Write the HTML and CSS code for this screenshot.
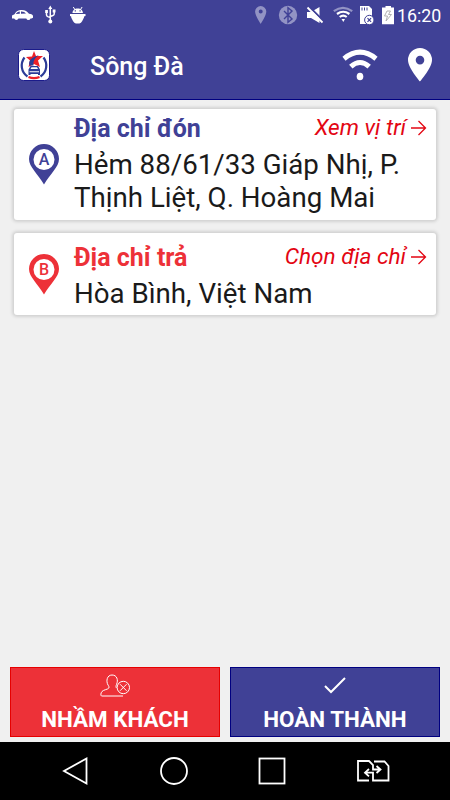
FILE: index.html
```html
<!DOCTYPE html>
<html lang="vi">
  <head>
    <title>Sông Đà</title>
    <meta charset="utf-8">
    <meta name="viewport" content="width=device-width, initial-scale=1">
    <link rel="stylesheet" href="styles.css">
  </head>
  <body>

    <div class="status-bar">
      <svg class="status-left" width="90" height="32" viewBox="0 0 90 32">
        <!-- car -->
        <path fill="#fff" d="M12 18.500v-3l2.500-1.200c1.500-2.500 3-3.900 6-4.200 4.500-.3 6.500 1 8.500 3.700 2.500.2 4 .9 4 2.300v1.600l-1.500.8h-1a2.200 2.200 0 0 1-4.200 0h-7.800a2.300 2.300 0 0 1-4.300 0z"/>
        <path fill="#404196" d="M15.800 14c1-1.500 2.200-2.300 4-2.600v2.300zM21 11.400c2.500-.1 3.800.6 5 2l-5 .3z"/>
        <!-- usb -->
        <g fill="none" stroke="#fff" stroke-width="1.500">
          <path d="M50.300 8v13M46.500 11.500V15q0 1 1.300 1.600l2.500 1M54.200 11v3q0 1-1.300 1.500l-2.600 1"/>
        </g>
        <path fill="#fff" d="M48.300 9l2-3.500 2 3.500zM45.200 10h2.700v3h-2.700zM52.700 9.500h2.800v3h-2.800z"/>
        <circle cx="50.300" cy="21.500" r="2" fill="#fff"/>
        <!-- android bug -->
        <path fill="#fff" d="M72.500 13c0-2.500 2-4.500 5.200-4.500s5.200 2 5.200 4.500zM70 14h15.500v2l-1.500.6v1l-1 1.800c-1 2.800-2.700 4.200-5.300 4.200s-4.500-1.400-5.500-4.200l-1-1.800v-1L70 16z"/>
        <path d="M73.300 7l1.700 2.800M82.100 7l-1.700 2.800" stroke="#fff" stroke-width="1"/>
        <path fill="#404196" d="M74.700 10.300h1.200v1.200h-1.200zM79.500 10.300h1.200v1.200h-1.200z"/>
      </svg>
      <svg class="status-right" width="144" height="32" viewBox="252 0 144 32">
        <path fill="#9293c4" fill-rule="evenodd" d="M260.700 6a5.600 5.600 0 0 0-5.600 5.600c0 4 5.600 12.400 5.600 12.400s5.600-8.400 5.600-12.400a5.600 5.600 0 0 0-5.600-5.600zm0 3.500a2 2 0 1 1 0 4 2 2 0 0 1 0-4z"/>
        <circle cx="288" cy="15" r="9.200" fill="#9293c4"/>
        <path d="M284 11l8 8-4 3.200V7.800l4 3.200-8 8" fill="none" stroke="#404196" stroke-width="1.400"/>
        <!-- muted speaker -->
        <path fill="#fff" d="M307 12h4l8.500-5v16l-8.500-5h-4z"/>
        <path d="M309 6.500L324 21.500" stroke="#404196" stroke-width="2"/>
        <path d="M307.500 7.500L322.500 22.500" stroke="#fff" stroke-width="1.800"/>
        <!-- wifi -->
        <path d="M333.800 11.200q9.200-6.600 18.400 0" fill="none" stroke="#9293c4" stroke-width="2.200"/>
        <path d="M337 14q6.200-4.500 12.400 0M339.700 17q3.500-2.700 7 0" fill="none" stroke="#fff" stroke-width="2.200"/>
        <path d="M341.500 19h3.500l-1.700 3z" fill="#fff"/>
        <!-- sd card -->
        <path fill="#fff" d="M360 6h9l3 3v15h-12z"/>
        <path d="M362 7.500v3M364.500 7.500v3M367 7.500v3" stroke="#404196" stroke-width="1"/>
        <circle cx="369.300" cy="20" r="4.700" fill="#fff" stroke="#404196" stroke-width="1"/>
        <path d="M367.500 18.200l3.600 3.600m0-3.600l-3.600 3.600" stroke="#404196" stroke-width="1.200"/>
        <!-- battery -->
        <path fill="#fff" d="M382 7.500h3.500V6h5.500v1.500h3v16.700h-12z"/>
        <path d="M387 11l-2.500 5h3l-1.500 5 5.500-6.500h-3l2-3.500z" fill="none" stroke="#aaa" stroke-width=".9"/>
      </svg>
      <span class="clock">16:20</span>
    </div>

    <div class="header">
      <svg class="logo" width="32" height="32" viewBox="0 0 32 32">
        <rect x=".5" y=".5" width="31" height="31" rx="5" fill="#fff" stroke="#1b1b8a" stroke-width="1"/>
        <path d="M6.500 8.500c-4.500 6-3.500 14.500 3 19M25.500 8.500c4.500 6 3.500 14.500-3 19" fill="none" stroke="#2b3b97" stroke-width="2.200"/>
        <path d="M16 2l2 5h7l-5 4.500 2 6.500-6-3-5.500 3 1.500-6.500L8 8l6-.500z" fill="#ed2027"/>
        <path d="M11.500 16.500c-1.500-5 2-8 9.500-10.500-4 3-6 5.500-5.500 10.500z" fill="#2b3b97"/>
        <path d="M10.500 20.500l2-3.500h7.500l2 3.500v5.500h-2v-1h-7.500v1h-2z" fill="#2b3b97"/>
        <path d="M12.500 20l1-1.800h5.500l1 1.800zM11.500 22.300h9.500v1h-9.500z" fill="#fff"/>
        <path d="M10.500 28q5.500 2.200 11 0" fill="none" stroke="#ed2027" stroke-width="2.400"/>
      </svg>
      <h1>Sông Đà</h1>
      <svg class="wifi" width="36" height="34" viewBox="0 0 36 34">
        <path d="M2 10.700q16-13 32 0" fill="none" stroke="#fff" stroke-width="5"/>
        <path d="M8.800 18.700q9.200-8.400 18.400 0" fill="none" stroke="#fff" stroke-width="5"/>
        <ellipse cx="18" cy="28.500" rx="3.300" ry="3.800" fill="#fff"/>
      </svg>
      <svg class="pin" width="24" height="34" viewBox="0 0 24 34">
        <path fill="#fff" fill-rule="evenodd" d="M12 0A12 12 0 0 0 0 12c0 8 12 21.500 12 21.500S24 20 24 12A12 12 0 0 0 12 0zm0 7.800a4.300 4.300 0 1 1 0 8.600 4.300 4.300 0 0 1 0-8.600z"/>
      </svg>
    </div>

    <div class="content">
      <div class="card pickup">
        <svg class="marker" width="30" height="41" viewBox="0 0 30 41">
          <path fill="currentColor" fill-rule="evenodd" d="M15 0A15 15 0 0 0 0 15c0 8 9 15 15 25.500C21 30 30 23 30 15A15 15 0 0 0 15 0zm0 5a10.500 10.500 0 1 1 0 21 10.500 10.500 0 0 1 0-21z"/>
          <text x="15" y="20.800" text-anchor="middle">A</text>
        </svg>
        <div class="info">
          <div class="title">
            <h2>Địa chỉ đón</h2>
            <a>Xem vị trí
              <svg width="16" height="16" viewBox="0 0 16 16"><path d="M0 8h14M7.500 1l7 7-7 7"/></svg>
            </a>
          </div>
          <p>Hẻm 88/61/33 Giáp Nhị, P.<br>Thịnh Liệt, Q. Hoàng Mai</p>
        </div>
      </div>

      <div class="card dropoff">
        <svg class="marker" width="30" height="41" viewBox="0 0 30 41">
          <path fill="currentColor" fill-rule="evenodd" d="M15 0A15 15 0 0 0 0 15c0 8 9 15 15 25.500C21 30 30 23 30 15A15 15 0 0 0 15 0zm0 5a10.500 10.500 0 1 1 0 21 10.500 10.500 0 0 1 0-21z"/>
          <text x="15" y="20.800" text-anchor="middle">B</text>
        </svg>
        <div class="info">
          <div class="title">
            <h2>Địa chỉ trả</h2>
            <a>Chọn địa chỉ
              <svg width="16" height="16" viewBox="0 0 16 16"><path d="M0 8h14M7.500 1l7 7-7 7"/></svg>
            </a>
          </div>
          <p>Hòa Bình, Việt Nam</p>
        </div>
      </div>
    </div>

    <div class="actions">
      <button class="btn-red">
        <svg width="30" height="24" viewBox="0 0 30 24">
          <g fill="none" stroke="#fff" stroke-width="1">
            <path d="M23 22H1.500c-1-.5-.8-3 .5-4.500 1.500-1.800 6-2 6.800-3.500.5-1-.1-2-.8-3C5.800 7 7 1 12 1s6.500 5 4.500 9.500c-.6 1.500-.8 2.500 0 3.500"/>
            <circle cx="23.300" cy="13.500" r="6.200"/>
            <path d="M20 10.200l6.600 6.600m0-6.600L20 16.800"/>
          </g>
        </svg>
        <span>NHẦM KHÁCH</span>
      </button>
      <button class="btn-blue">
        <svg width="22" height="24" viewBox="0 0 22 24">
          <path d="M1 12l6 6L21 4" fill="none" stroke="#fff" stroke-width="2"/>
        </svg>
        <span>HOÀN THÀNH</span>
      </button>
    </div>

    <div class="nav-bar">
      <svg width="28" height="30" viewBox="0 0 28 30"><path d="M24.500 2.500v25L2 15z"/></svg>
      <svg width="30" height="30" viewBox="0 0 30 30"><circle cx="15" cy="15" r="13"/></svg>
      <svg width="30" height="30" viewBox="0 0 30 30"><rect x="2.500" y="2.500" width="25" height="25"/></svg>
      <svg width="34" height="24" viewBox="0 0 34 24">
        <path d="M13 21.500H2V2h11l4 4v4.500h7M20.500 7l4 3.500-4 3.500M18 2.500h10.500L32.500 7v14.500H17V13.700H9.500M13 10l-4 3.700 4 3.700"/>
      </svg>
    </div>

  </body>
</html>
```

FILE: styles.css
```css
* {
  box-sizing: border-box;
}
body {
  margin: 0;
  height: 800px;
  display: flex;
  flex-direction: column;
  overflow: hidden;
  background-color: #f0f0f0;
  font-family: Roboto, "Noto Sans", sans-serif;
}
h1, h2, p {
  margin: 0;
}
svg {
  display: block;
  flex-shrink: 0;
}

.status-bar {
  height: 32px;
  display: flex;
  justify-content: flex-end;
  background-color: #404196;
}
.status-left {
  margin-right: auto;
}
.clock {
  width: 54px;
  padding-left: 1px;
  font-size: 17.8px;
  line-height: 32px;
  color: #fff;
}

.header {
  height: 68px;
  padding: 0 18px;
  display: flex;
  align-items: center;
  background-color: #404196;
  border-bottom: 1px solid #000080;
}
.header .logo {
  margin-top: -2px;
}
.header h1 {
  margin-left: 40px;
  padding-top: 2px;
  flex: 1;
  font-size: 25px;
  font-weight: 500;
  color: #fff;
}
.header .wifi {
  margin-top: -1px;
}
.header .pin {
  margin-left: 30px;
  margin-top: -2px;
}

.content {
  flex: 1;
  padding: 9px 14px;
}
.card {
  display: flex;
  align-items: center;
  padding-left: 15px;
  background-color: #fff;
  border-radius: 3px;
  box-shadow: 0 0 3px 2px #d2d2d2;
}
.pickup {
  height: 111px;
  color: #404196;
}
.dropoff {
  height: 82px;
  margin-top: 13px;
  color: #ed3138;
}
.marker text {
  font-size: 16px;
  font-weight: 500;
  fill: currentColor;
}
.info {
  flex: 1;
  margin-left: 15px;
  align-self: flex-start;
}
.title {
  height: 39px;
  padding-right: 9px;
  display: flex;
  justify-content: space-between;
}
.title h2 {
  font-size: 25px;
  font-weight: 700;
  line-height: 40px;
}
.title a {
  height: 37px;
  display: flex;
  align-items: center;
  gap: 5px;
  font-size: 22.6px;
  font-style: italic;
  color: #e30613;
}
.title a svg {
  fill: none;
  stroke: #e30613;
  stroke-width: 1.3;
}
.info p {
  font-size: 27.7px;
  line-height: 33px;
  color: #1a1a1a;
  white-space: nowrap;
}
.dropoff .info {
  padding-top: 5px;
}

.actions {
  padding: 0 10px 5px;
  display: flex;
  gap: 10px;
}
.actions button {
  flex: 1;
  height: 70px;
  padding: 6px 0 0;
  display: flex;
  flex-direction: column;
  align-items: center;
  font-family: inherit;
  font-size: 22.4px;
  font-weight: 700;
  line-height: 42px;
  color: #fff;
}
.btn-red {
  background-color: #ed3138;
  border: 1px solid #e60000;
}
.btn-blue {
  background-color: #404196;
  border: 1px solid #000080;
}

.nav-bar {
  height: 58px;
  padding: 0 60px 0 62px;
  display: flex;
  align-items: center;
  justify-content: space-between;
  background-color: #000;
}
.nav-bar svg {
  fill: none;
  stroke: #fff;
  stroke-width: 1.8;
}
```
